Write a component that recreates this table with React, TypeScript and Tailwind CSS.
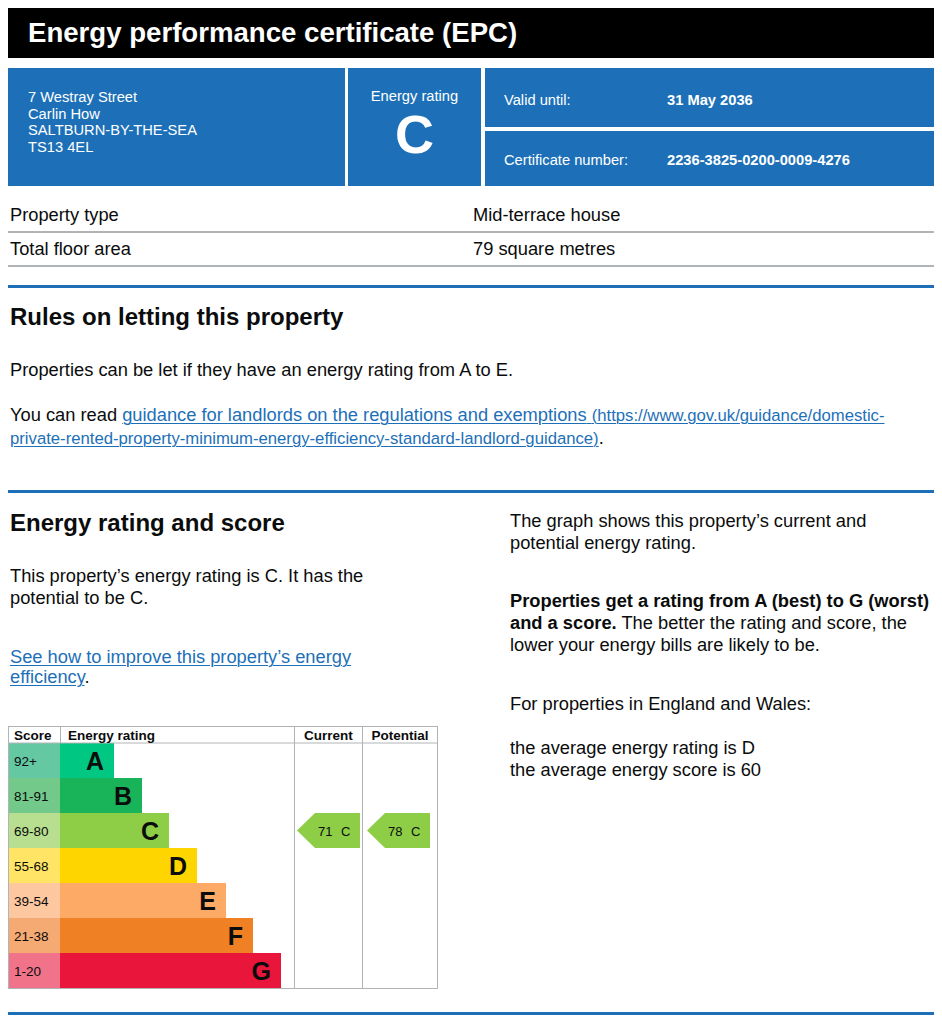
const bands = [
  { score: '92+', letter: 'A', end: 106, bar: '#00c781', light: '#64c8a3' },
  { score: '81-91', letter: 'B', end: 134, bar: '#19b459', light: '#72c98a' },
  { score: '69-80', letter: 'C', end: 161, bar: '#8dce46', light: '#b8de8f' },
  { score: '55-68', letter: 'D', end: 189, bar: '#ffd500', light: '#ffe466' },
  { score: '39-54', letter: 'E', end: 218, bar: '#fcaa65', light: '#fdc7a0' },
  { score: '21-38', letter: 'F', end: 245, bar: '#ef8023', light: '#f4aa72' },
  { score: '1-20', letter: 'G', end: 273, bar: '#e9153b', light: '#f0738a' },
];

const ROW = 35;
const HEAD = 17;

function RatingChart() {
  const h = HEAD + ROW * 7;
  const arrow = (x: number, score: string, letter: string) => {
    const top = HEAD + ROW * 2;
    const bottom = top + ROW;
    const mid = (top + bottom) / 2;
    return (
      <g>
        <polygon
          points={`${x},${mid} ${x + 18},${top} ${x + 63},${top} ${x + 63},${bottom} ${x + 18},${bottom}`}
          fill="#8dce46"
        />
        <text x={x + 21} y={mid + 5} fontSize="13" fill="#0b0c0c">
          {score}
        </text>
        <text x={x + 44} y={mid + 5} fontSize="13" fill="#0b0c0c">
          {letter}
        </text>
      </g>
    );
  };

  return (
    <svg width="430" height={h + 1} viewBox={`0 0 430 ${h + 1}`} className="block" style={{ fontFamily: '"Liberation Sans", Arial, sans-serif' }}>
      {bands.map((b, i) => {
        const y = HEAD + i * ROW;
        return (
          <g key={b.letter}>
            <rect x="0" y={y} width="52" height={ROW} fill={b.light} />
            <rect x="52" y={y} width={b.end - 52} height={ROW} fill={b.bar} />
            <text x="6" y={y + 22.5} fontSize="13.5" fill="#0b0c0c">
              {b.score}
            </text>
            <text x={b.end - 10} y={y + 27} fontSize="25" fontWeight="bold" textAnchor="end" fill="#0b0c0c">
              {b.letter}
            </text>
          </g>
        );
      })}
      <rect x="0.5" y="0.5" width="429" height={h} fill="none" stroke="#b1b4b6" />
      <line x1="0" y1={HEAD} x2="430" y2={HEAD} stroke="#b1b4b6" />
      <line x1="52.5" y1="0" x2="52.5" y2={HEAD} stroke="#b1b4b6" />
      <line x1="286.5" y1="0" x2="286.5" y2={h} stroke="#b1b4b6" />
      <line x1="354.5" y1="0" x2="354.5" y2={h} stroke="#b1b4b6" />
      <text x="6" y="14" fontSize="13.5" fontWeight="bold" fill="#0b0c0c">Score</text>
      <text x="60" y="14" fontSize="13.5" fontWeight="bold" fill="#0b0c0c">Energy rating</text>
      <text x="320.5" y="14" fontSize="13.5" fontWeight="bold" textAnchor="middle" fill="#0b0c0c">Current</text>
      <text x="392" y="14" fontSize="13.5" fontWeight="bold" textAnchor="middle" fill="#0b0c0c">Potential</text>
      {arrow(289, '71', 'C')}
      {arrow(359, '78', 'C')}
    </svg>
  );
}

function SummaryRow({ label, value }: { label: string; value: string }) {
  return (
    <div className="grid grid-cols-[465px_1fr] border-b-2 border-[#b1b4b6] py-[6px] text-[18.3px] leading-[20px]">
      <span className="pl-[2px]">{label}</span>
      <span>{value}</span>
    </div>
  );
}

export default function App() {
  return (
    <div className="min-h-screen bg-white px-2 pt-2 text-[#0b0c0c]" style={{ fontFamily: '"Liberation Sans", Arial, sans-serif' }}>
      <div className="flex h-[50px] items-center bg-black pl-5 text-[27.6px] font-bold text-white">
        Energy performance certificate (EPC)
      </div>

      <div className="mt-[10px] flex h-[118px] gap-[3px] text-white">
        <div className="w-[337px] bg-[#1d70b8] pl-5 pt-[21px] text-[14.7px] leading-[16.5px]">
          <div>7 Westray Street</div>
          <div>Carlin How</div>
          <div>SALTBURN-BY-THE-SEA</div>
          <div>TS13 4EL</div>
        </div>
        <div className="flex w-[133px] flex-col items-center bg-[#1d70b8] pt-[20px]">
          <span className="text-[14.7px] leading-[16px]">Energy rating</span>
          <span className="mt-[2px] text-[54px] font-bold leading-[56px]">C</span>
        </div>
        <div className="ml-px flex flex-1 flex-col gap-[4px] text-[14.7px]">
          <div className="flex h-[59px] items-center bg-[#1d70b8] pl-[19px] pt-[5px]">
            <span className="w-[163px]">Valid until:</span>
            <span className="font-bold">31 May 2036</span>
          </div>
          <div className="flex flex-1 items-center bg-[#1d70b8] pl-[19px] pt-[3px]">
            <span className="w-[163px]">Certificate number:</span>
            <span className="font-bold">2236-3825-0200-0009-4276</span>
          </div>
        </div>
      </div>

      <div className="mt-[13px]">
        <SummaryRow label="Property type" value="Mid-terrace house" />
        <SummaryRow label="Total floor area" value="79 square metres" />
      </div>

      <div className="mt-[18px] h-[3px] bg-[#1d70b8]" />

      <section className="pl-[2px]">
        <h2 className="mt-[15px] text-[24px] font-bold leading-[28px]">Rules on letting this property</h2>
        <p className="mt-[28px] text-[18.3px] leading-[22px]">Properties can be let if they have an energy rating from A to E.</p>
        <p className="mt-[23px] text-[18.3px] leading-[22px]">
          You can read{' '}
          <a href="#" className="text-[#1d70b8] underline decoration-1 underline-offset-2">
            guidance for landlords on the regulations and exemptions{' '}
            <span className="text-[16.7px]">
              (https://www.gov.uk/guidance/domestic-private-rented-property-minimum-energy-efficiency-standard-landlord-guidance)
            </span>
          </a>
          .
        </p>
      </section>

      <div className="mt-[40px] h-[3px] bg-[#1d70b8]" />

      <section className="grid grid-cols-[502px_1fr]">
        <div className="pl-[2px] pt-[16px]">
          <h2 className="text-[24px] font-bold leading-[28px]">Energy rating and score</h2>
          <p className="mt-[28px] max-w-[400px] text-[18.3px] leading-[22px]">
            This property’s energy rating is C. It has the potential to be C.
          </p>
          <p className="mt-[38px] max-w-[400px] text-[18.3px] leading-[20px]">
            <a href="#" className="text-[#1d70b8] underline decoration-1 underline-offset-2">
              See how to improve this property’s energy efficiency
            </a>
            .
          </p>
          <div className="ml-[-2px] mt-[39px]">
            <RatingChart />
          </div>
        </div>
        <div className="pt-[17px] text-[18.3px] leading-[22px]">
          <p>The graph shows this property’s current and potential energy rating.</p>
          <p className="mt-[36px]">
            <strong>Properties get a rating from A (best) to G (worst) and a score.</strong> The better the rating
            and score, the lower your energy bills are likely to be.
          </p>
          <p className="mt-[37px]">For properties in England and Wales:</p>
          <p className="mt-[22px]">
            the average energy rating is D
            <br />
            the average energy score is 60
          </p>
        </div>
      </section>

      <div className="mt-[23px] h-[3px] bg-[#1d70b8]" />
    </div>
  );
}
